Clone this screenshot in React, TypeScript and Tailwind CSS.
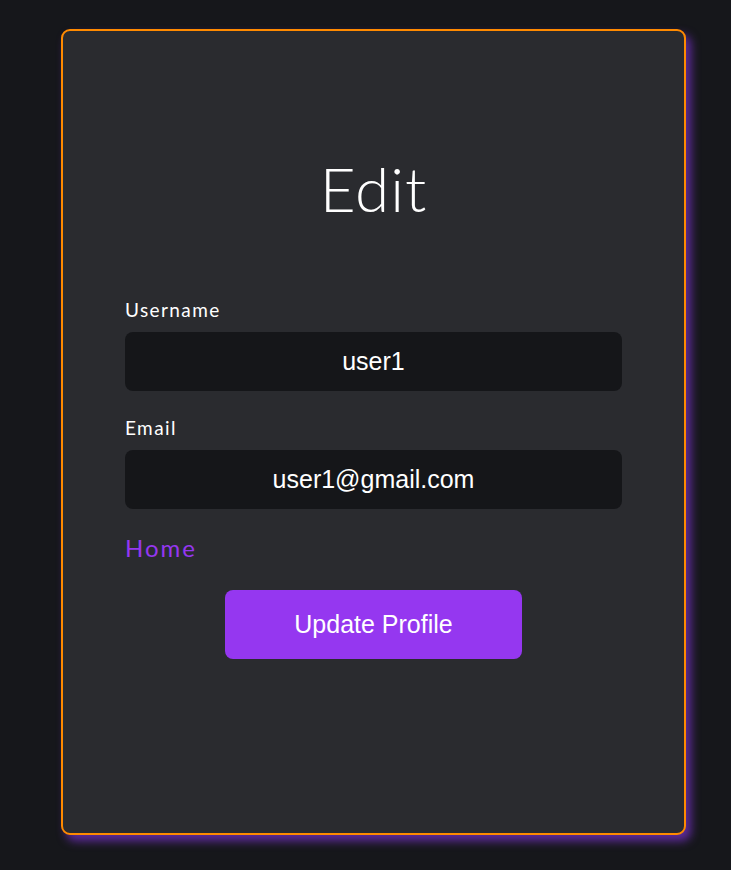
export default function App() {
  return (
    <div className="min-h-[870px] w-full bg-[#16171b] pt-[29px] pb-[35px]">
      <div className="ml-[61px] w-[625px] h-[806px] rounded-[9px] border-2 border-[#ff8a00] bg-[#2a2b2f] shadow-[5px_6px_10px_rgba(120,50,200,0.75)] px-[62px] pt-[117px]">
        <h1 className="text-center text-[62px] leading-[80px] font-light tracking-[1px] text-white [font-family:Lato,'Open_Sans',sans-serif]">
          Edit
        </h1>

        <form className="mt-[70px] flex flex-col" onSubmit={(e) => e.preventDefault()}>
          <label className="text-[19px] leading-[24px] tracking-[1.4px] text-white [font-family:Lato,sans-serif]">
            Username
          </label>
          <input
            defaultValue="user1"
            className="mt-[10px] h-[59px] w-full rounded-[8px] bg-[#151619] text-center text-[25px] text-white outline-none [font-family:'Liberation_Sans',Arial,sans-serif]"
          />

          <label className="mt-[25px] text-[19px] leading-[24px] tracking-[1.4px] text-white [font-family:Lato,sans-serif]">
            Email
          </label>
          <input
            defaultValue="user1@gmail.com"
            className="mt-[10px] h-[59px] w-full rounded-[8px] bg-[#151619] text-center text-[25px] text-white outline-none [font-family:'Liberation_Sans',Arial,sans-serif]"
          />

          <a href="#" className="mt-[24px] self-start text-[24px] leading-[30px] tracking-[2px] text-[#9537f0] [font-family:Lato,sans-serif]">
            Home
          </a>

          <button
            type="submit"
            className="mt-[27px] self-center h-[69px] w-[297px] rounded-[8px] bg-[#9537f0] text-[25px] text-white [font-family:'Liberation_Sans',Arial,sans-serif]"
          >
            Update Profile
          </button>
        </form>
      </div>
    </div>
  );
}
